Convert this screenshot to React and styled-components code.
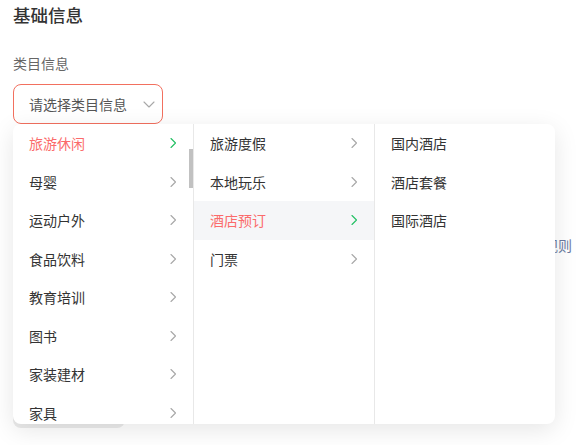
import React from 'react';
import styled, { createGlobalStyle } from 'styled-components';

const GlobalStyle = createGlobalStyle`
  html, body {
    margin: 0;
    padding: 0;
    background: #ffffff;
    font-family: "Noto Sans CJK SC", "Noto Sans", sans-serif;
  }
`;

const level1 = ['旅游休闲', '母婴', '运动户外', '食品饮料', '教育培训', '图书', '家装建材', '家具'];
const level2 = ['旅游度假', '本地玩乐', '酒店预订', '门票'];
const level3 = ['国内酒店', '酒店套餐', '国际酒店'];

function Chevron({ active, size = 12 }) {
  return (
    <svg width={size} height={size} viewBox="0 0 12 12" fill="none">
      <path
        d="M4 1.5 L8.5 6 L4 10.5"
        stroke={active ? '#22c063' : '#a8a8a8'}
        strokeWidth="1.1"
        strokeLinecap="round"
        strokeLinejoin="round"
      />
    </svg>
  );
}

export default function App() {
  return (
    <Page>
      <GlobalStyle />
      <Title>基础信息</Title>
      <Label>类目信息</Label>
      <Field>
        <Select>
          <Placeholder>请选择类目信息</Placeholder>
          <svg width="14" height="14" viewBox="0 0 14 14" fill="none">
            <path d="M2 5 L7 10 L12 5" stroke="#a8a8a8" strokeWidth="1.1" strokeLinecap="round" strokeLinejoin="round" />
          </svg>
        </Select>
        <Menu>
          <Column>
            {level1.map((name, i) => (
              <Option key={name} $active={i === 0}>
                <span>{name}</span>
                <Chevron active={i === 0} />
              </Option>
            ))}
            <ScrollThumb />
          </Column>
          <Column>
            {level2.map((name, i) => (
              <Option key={name} $active={i === 2} $hover={i === 2}>
                <span>{name}</span>
                <Chevron active={i === 2} />
              </Option>
            ))}
          </Column>
          <Column $last>
            {level3.map((name) => (
              <Option key={name}>
                <span>{name}</span>
              </Option>
            ))}
          </Column>
        </Menu>
      </Field>
      <RuleRow>
        <RuleLink>查看规则</RuleLink>
      </RuleRow>
      <Footer>
        <GhostButton>取消</GhostButton>
      </Footer>
    </Page>
  );
}

const Page = styled.div`
  width: 585px;
  height: 445px;
  box-sizing: border-box;
  padding: 3px 13px 0;
  overflow: hidden;
  display: flex;
  flex-direction: column;
`;

const Title = styled.div`
  font-size: 17.5px;
  line-height: 24px;
  font-weight: 500;
  color: #333333;
`;

const Label = styled.div`
  margin-top: 26px;
  font-size: 14px;
  line-height: 20px;
  color: #666666;
`;

const Field = styled.div`
  position: relative;
  margin-top: 11px;
  z-index: 2;
`;

const Select = styled.div`
  width: 150px;
  height: 40px;
  box-sizing: border-box;
  border: 1px solid #f2705f;
  border-radius: 8px;
  padding: 0 6px 0 15px;
  display: flex;
  align-items: center;
  justify-content: space-between;
`;

const Placeholder = styled.span`
  font-size: 14px;
  color: #555555;
`;

const Menu = styled.div`
  position: absolute;
  top: 40px;
  left: 0;
  width: 542px;
  height: 300px;
  background: #ffffff;
  border-radius: 8px;
  box-shadow: 0 6px 24px rgba(0, 0, 0, 0.1);
  display: grid;
  grid-template-columns: 181px 181px 180px;
  overflow: hidden;
`;

const Column = styled.div`
  position: relative;
  overflow: hidden;
  border-right: ${(p) => (p.$last ? 'none' : '1px solid #e8e8e8')};
`;

const Option = styled.div`
  height: 38.5px;
  display: flex;
  align-items: center;
  justify-content: space-between;
  padding: 0 14px 0 16px;
  font-size: 14px;
  color: ${(p) => (p.$active ? '#fb6b6b' : '#333333')};
  background: ${(p) => (p.$hover ? '#f5f6f8' : 'transparent')};
`;

const ScrollThumb = styled.div`
  position: absolute;
  top: 25px;
  right: 0;
  width: 4px;
  height: 39px;
  background: #c1c1c1;
`;

const RuleRow = styled.div`
  margin-top: 111px;
  display: flex;
  justify-content: flex-end;
`;

const RuleLink = styled.span`
  font-size: 14px;
  line-height: 20px;
  color: #6b7aa1;
`;

const Footer = styled.div`
  margin-top: 137px;
`;

const GhostButton = styled.div`
  width: 112px;
  height: 36px;
  border-radius: 8px;
  background: #ebebeb;
  color: #666666;
  font-size: 14px;
  display: flex;
  align-items: center;
  justify-content: center;
`;
